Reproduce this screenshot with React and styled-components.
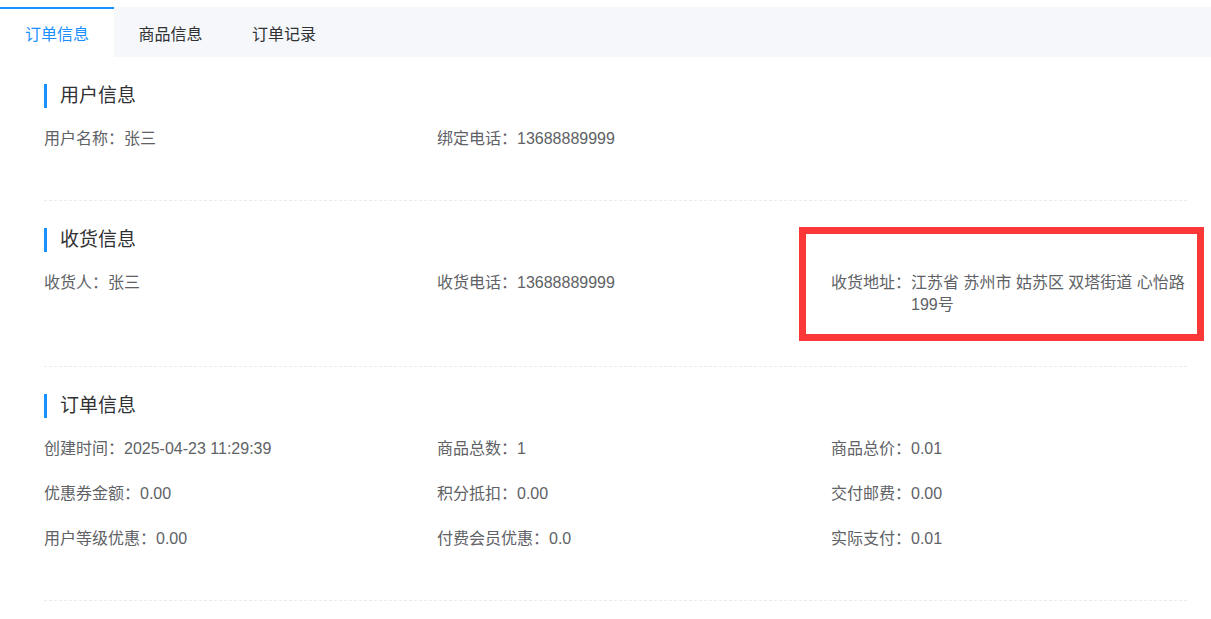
import React from 'react';
import styled, { createGlobalStyle } from 'styled-components';

const Global = createGlobalStyle`
  body { margin: 0; background: #fff; font-family: "Liberation Sans", "Noto Sans CJK SC", sans-serif; }
`;

const Page = styled.div`
  padding-top: 7px;
  width: 1211px;
`;

const TabBar = styled.div`
  display: flex;
  height: 50px;
  background: #f5f7fa;
`;

const Tab = styled.div`
  width: ${({ w }) => w}px;
  display: flex;
  align-items: center;
  justify-content: center;
  font-size: 16px;
  color: ${({ active }) => (active ? '#1890ff' : '#303133')};
  background: ${({ active }) => (active ? '#fff' : 'transparent')};
  border-top: 2px solid ${({ active }) => (active ? '#1890ff' : 'transparent')};
  box-sizing: border-box;
`;

const Body = styled.div`
  padding: 0 24px 0 44px;
  position: relative;
`;

const Section = styled.div`
  padding: 27px 0 50px;
  border-bottom: 1px dashed #e8ebef;
`;

const Title = styled.div`
  font-size: 19px;
  color: #303133;
  height: 24px;
  line-height: 24px;
  padding-left: 13px;
  border-left: 3px solid #1890ff;
  margin-bottom: 20px;
  display: flex;
  align-items: center;
`;

const Grid = styled.div`
  display: grid;
  grid-template-columns: 393px 394px 356px;
  row-gap: 23px;
`;

const Item = styled.div`
  display: flex;
  font-size: 16px;
  line-height: 22px;
  color: #606266;
`;

const Label = styled.span`
  white-space: nowrap;
`;

const Highlight = styled.div`
  position: absolute;
  left: 799px;
  top: 170px;
  width: 405px;
  height: 114px;
  border: 7px solid #fa3838;
  box-sizing: border-box;
  pointer-events: none;
`;

const rows = [
  { title: '用户信息', items: [['用户名称：', '张三'], ['绑定电话：', '13688889999']] },
  {
    title: '收货信息',
    items: [['收货人：', '张三'], ['收货电话：', '13688889999'], ['收货地址：', '江苏省 苏州市 姑苏区 双塔街道 心怡路199号']],
  },
  {
    title: '订单信息',
    items: [
      ['创建时间：', '2025-04-23 11:29:39'], ['商品总数：', '1'], ['商品总价：', '0.01'],
      ['优惠券金额：', '0.00'], ['积分抵扣：', '0.00'], ['交付邮费：', '0.00'],
      ['用户等级优惠：', '0.00'], ['付费会员优惠：', '0.0'], ['实际支付：', '0.01'],
    ],
  },
];

export default function App() {
  return (
    <Page>
      <Global />
      <TabBar>
        <Tab w={114} active>订单信息</Tab>
        <Tab w={113}>商品信息</Tab>
        <Tab w={114}>订单记录</Tab>
      </TabBar>
      <Body>
        {rows.map((s) => (
          <Section key={s.title}>
            <Title>{s.title}</Title>
            <Grid>
              {s.items.map(([l, v]) => (
                <Item key={l}>
                  <Label>{l}</Label>
                  <span>{v}</span>
                </Item>
              ))}
            </Grid>
          </Section>
        ))}
        <Highlight />
      </Body>
    </Page>
  );
}
